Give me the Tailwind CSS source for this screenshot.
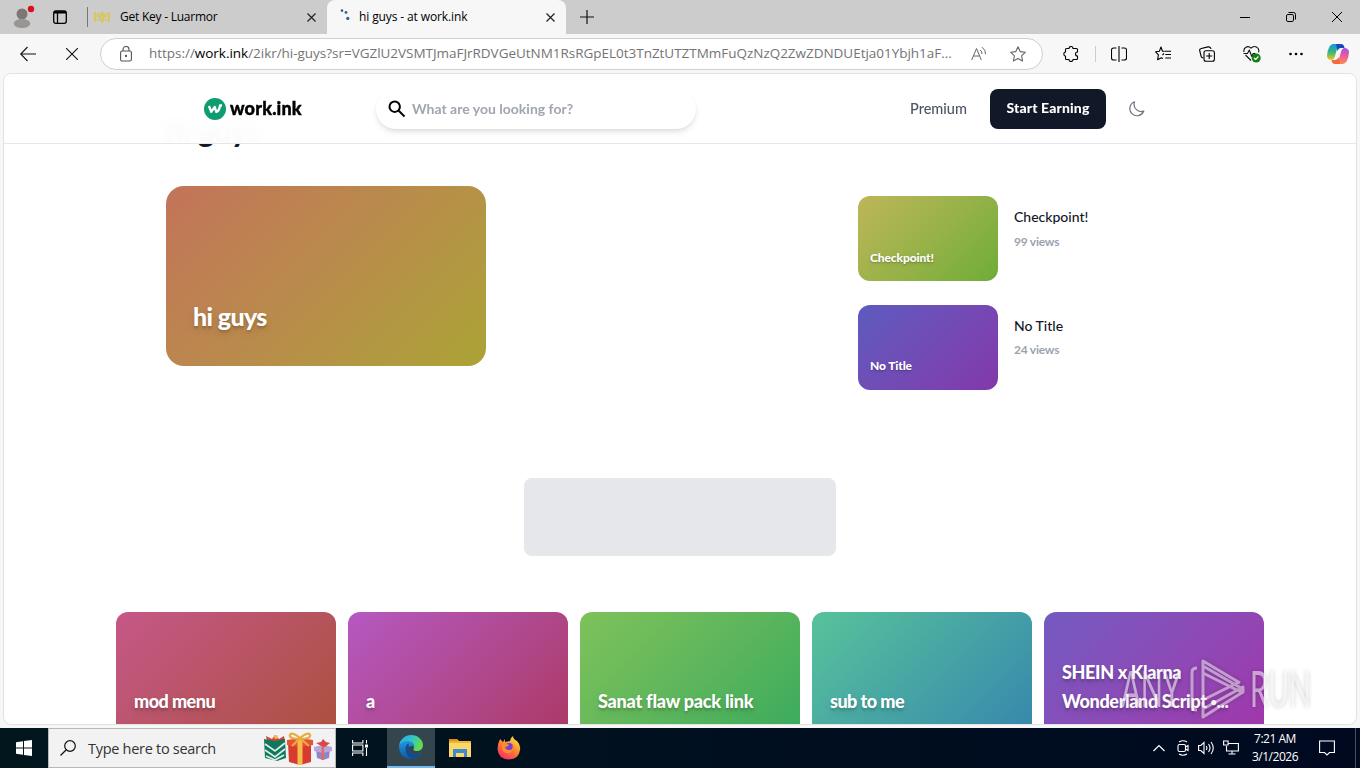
<!DOCTYPE html>
<html lang="en">
<head>
    <meta charset="UTF-8">
    <meta name="viewport" content="width=device-width, initial-scale=1.0">
    <title>hi guys - at work.ink</title>
    <script src="https://cdn.jsdelivr.net/npm/@tailwindcss/browser@4"></script>
</head>
<body class="w-[1360px] h-[768px] overflow-hidden flex flex-col bg-[#f7f7f7] font-['Open_Sans',sans-serif] text-black">

    <!-- Tab strip -->
    <div class="h-[34px] shrink-0 bg-[#cccccc] flex items-center">
        <svg class="ml-3 w-6 h-6 shrink-0" viewBox="0 0 24 24">
            <circle cx="10" cy="9" r="5.5" fill="#7d7875"/>
            <ellipse cx="10" cy="18.500" rx="8.3" ry="4.500" fill="#999593"/>
            <circle cx="19" cy="4" r="3.2" fill="#d8101c"/>
        </svg>
        <svg class="ml-[17px] w-[14px] h-[14px] shrink-0" viewBox="0 0 14 14" fill="none" stroke="#000" stroke-width="1.3">
            <rect x=".7" y=".9" width="12.6" height="12.4" rx="2"/>
            <path d="M1 2.300h12" stroke-width="2.400"/><path d="M4.500 2v11"/>
        </svg>
        <div class="ml-5 w-px h-5 bg-[#777]"></div>
        <svg class="ml-1.5 w-4 h-4 shrink-0" viewBox="0 0 16 16" fill="none" stroke="#d5c768" stroke-width="2.300">
            <path d="M1 3v10M4 4v3h2M4 12v-2M8 3l-2 5 2 5M8 3l2 5-2 5M12 4v3h-2M15 3v10M12 12v-2"/>
        </svg>
        <span class="ml-[10px] w-[187px] text-[12px] whitespace-nowrap tracking-[-0.02em]">Get Key - Luarmor</span>
        <svg class="w-[9px] h-[9px] shrink-0" viewBox="0 0 9 9" stroke="#222" stroke-width="1.2"><path d="M.5.5l8 8M8.5.5l-8 8"/></svg>
        <div class="ml-[11px] w-[239px] h-[34px] bg-[#f7f7f7] rounded-t-lg flex items-center">
            <svg class="ml-[12px] w-4 h-4 shrink-0" viewBox="0 0 16 16" fill="#315f8f">
                <circle cx="3" cy="1.6" r="1.3"/><circle cx="7" cy="3.4" r="1.4"/><circle cx="8.8" cy="9.4" r="1.6"/>
            </svg>
            <span class="ml-[4px] w-[187px] text-[12px] whitespace-nowrap tracking-[-0.01em]">hi guys - at work.ink</span>
            <svg class="w-[9px] h-[9px] shrink-0" viewBox="0 0 9 9" stroke="#222" stroke-width="1.2"><path d="M.5.5l8 8M8.5.5l-8 8"/></svg>
        </div>
        <svg class="ml-[14px] w-[14px] h-[14px] shrink-0" viewBox="0 0 14 14" stroke="#111" stroke-width="1.2"><path d="M7 0v14M0 7h14"/></svg>
        <div class="ml-auto mr-[18px] flex items-center gap-9">
            <svg class="w-[10px] h-[10px]" viewBox="0 0 10 10" stroke="#000" stroke-width="1"><path d="M0 5.5h10"/></svg>
            <svg class="w-[10px] h-[10px]" viewBox="0 0 10 10" fill="none" stroke="#000" stroke-width="1"><rect x=".5" y="2.5" width="7" height="7" rx="1.4"/><path d="M2.5 .5h5a2 2 0 0 1 2 2v5"/></svg>
            <svg class="w-[10px] h-[10px]" viewBox="0 0 10 10" stroke="#000" stroke-width="1"><path d="M0 0l10 10M10 0L0 10"/></svg>
        </div>
    </div>

    <!-- Toolbar -->
    <div class="h-[39px] shrink-0 flex items-center">
        <svg class="ml-5 w-4 h-4 shrink-0" viewBox="0 0 16 16" fill="none" stroke="#111" stroke-width="1.1"><path d="M16 8H.8M7.5 1L.7 8l6.8 7"/></svg>
        <svg class="ml-[30px] w-3 h-3 shrink-0" viewBox="0 0 12 12" stroke="#111" stroke-width="1.1"><path d="M0 0l12 12M12 0L0 12"/></svg>
        <div class="ml-[22px] w-[943px] h-8 bg-white rounded-full border border-[#cfcfcf] flex items-center shrink-0">
            <svg class="ml-[19px] w-3 h-4 shrink-0" viewBox="0 0 12 16" fill="none" stroke="#555" stroke-width="1.1">
                <rect x=".6" y="5" width="10.8" height="10" rx="1.5"/><path d="M3 5V3.500a3 3 0 0 1 6 0V5"/><circle cx="6" cy="10" r=".6" fill="#555"/>
            </svg>
            <span class="ml-[17px] w-[805px] text-[13.5px] whitespace-nowrap text-[#747474] tracking-[-0.002em]">https://<span class="text-black">work.ink</span>/2ikr/hi-guys?sr=VGZlU2VSMTJmaFJrRDVGeUtNM1RsRGpEL0t3TnZtUTZTMmFuQzNzQ2ZwZDNDUEtja01Ybjh1aF...</span>
            <svg class="ml-[17px] w-4 h-4 shrink-0" viewBox="0 0 16 16" fill="none" stroke="#666" stroke-width="1">
                <path d="M.7 14L5.500 2.500 10.300 14M2.400 10h6.200M9.200 4q2 1.500 1.800 4M11 1.200q4 2.800 3.500 7"/>
            </svg>
            <svg class="ml-[23px] w-4 h-4 shrink-0" viewBox="0 0 16 16" fill="none" stroke="#666" stroke-width="1.1" stroke-linejoin="round">
                <path d="M8 .8l2.200 4.800 5.200.6-3.800 3.600 1 5.200L8 12.400 3.400 15l1-5.200L.6 6.200l5.200-.6z"/>
            </svg>
        </div>
        <svg class="ml-[20px] w-4 h-4 shrink-0" viewBox="0 0 16 16" fill="none" stroke="#000" stroke-width="1.1" stroke-linejoin="round">
            <path d="M3.500 2.500H6a2 2 0 0 1 4 0h3.500q1 0 1 1V6a2 2 0 0 0 0 4v2.500q0 1-1 1H10a2 2 0 0 1-4 0H3.500q-1 0-1-1V10.200a2.200 2.200 0 0 1 0-4.300V3.500q0-1 1-1z"/>
        </svg>
        <div class="ml-4 w-px h-4 bg-[#ccc]"></div>
        <svg class="ml-[15px] w-4 h-4 shrink-0" viewBox="0 0 16 16" fill="none" stroke="#000" stroke-width="1.1">
            <path d="M5.500 2H2.500a2 2 0 0 0-2 2v8a2 2 0 0 0 2 2h3M10.500 2h3a2 2 0 0 1 2 2v8a2 2 0 0 1-2 2h-3M8 0v16"/>
        </svg>
        <svg class="ml-7 w-4 h-4 shrink-0" viewBox="0 0 16 16" fill="none" stroke="#000" stroke-width="1.100" stroke-linejoin="round">
            <path d="M9 5.300H7.500L6 1 4.400 5.200.6 5.800l2.800 3-.8 5L6.400 11.800l1.500.8M7.500 9L9 7.500M9.300 5.300H16M10.300 8.500H16M10.300 12H16"/>
        </svg>
        <svg class="ml-7 w-4 h-4 shrink-0" viewBox="0 0 16 16" fill="none" stroke="#000" stroke-width="1.100">
            <rect x="5" y="4.800" width="10.400" height="10.400" rx="2"/><path d="M10.200 7v6M7.200 10h6M12 3C11.500.5 10.500.6 9 .9L2.300 2.500C.8 2.900.4 3.600.8 5l1.400 5.500c.3 1 .8 1.400 2 1.500"/>
        </svg>
        <svg class="ml-7 w-[18px] h-[18px] shrink-0" viewBox="0 0 18 18" fill="none" stroke="#111" stroke-width="1.100" stroke-linejoin="round">
            <path d="M1 7C0 2.500 5 0 8 3.200 11-.2 17 2 15.600 7.400M2.500 10L8 15.500M.5 8.500h4L6.300 5l2.500 6.500 1.400-3h2.300"/>
            <circle cx="13.200" cy="13" r="4.500" fill="#128212" stroke="none"/><path d="M11 13l1.600 1.500 2.800-3" stroke="#fff"/>
        </svg>
        <svg class="ml-[27px] w-4 h-4 shrink-0" viewBox="0 0 16 16" fill="#000"><circle cx="2.500" cy="8" r="1.300"/><circle cx="8" cy="8" r="1.300"/><circle cx="13.500" cy="8" r="1.300"/></svg>
        <svg class="ml-[22px] w-6 h-6 shrink-0" viewBox="0 0 24 24">
            <defs>
                <linearGradient id="copA" x1="0" y1="0" x2="0" y2="1"><stop stop-color="#1496e8"/><stop offset=".5" stop-color="#35b87a"/><stop offset="1" stop-color="#f2c51c"/></linearGradient>
                <linearGradient id="copB" x1="0" y1="0" x2="0" y2="1"><stop stop-color="#9a52e8"/><stop offset=".5" stop-color="#f05a98"/><stop offset="1" stop-color="#ff8a4c"/></linearGradient>
            </defs>
            <path d="M7 2h8q-3 1-4 5L9 14q-1 4-4 4-4-.5-4-4.500Q2 3 7 2z" fill="url(#copA)"/>
            <path d="M10 2h5q3 0 3.500 4h-4q-2 0-3 3z" fill="#1748ba"/>
            <path d="M17 22H9q3-1 4-5l2-7q1-4 4-4 4 .5 4 4.500Q22 21 17 22z" fill="url(#copB)"/>
            <path d="M14 22H9q-3 0-3.500-4h4q2 0 3-3z" fill="#f26a3b"/>
        </svg>
    </div>

    <!-- Page -->
    <div class="mx-[3px] h-[652px] shrink-0 bg-white rounded-lg border border-[#e2e2e2] overflow-hidden font-[Lato,sans-serif]">
        <header class="relative z-10 h-[70px] bg-white/97 backdrop-blur-sm border-b border-gray-200 flex items-center">
            <svg class="ml-[200px] w-[22px] h-[22px] shrink-0" viewBox="0 0 22 22">
                <circle cx="11" cy="11" r="11" fill="#0d9d70"/>
                <path d="M5 8l2.200 5.800 3.600-4.800 1.500 5q3-1 3.700-6.500h2" fill="none" stroke="#fff" stroke-width="2.300" stroke-linejoin="round"/>
            </svg>
            <span class="ml-[4px] w-[146px] text-[18px] font-black tracking-[0.01em] [-webkit-text-stroke:0.4px_black]">work.ink</span>
            <div class="w-[320px] h-10 rounded-full bg-white shadow-md flex items-center shrink-0">
                <svg class="ml-3 w-[18px] h-[18px] shrink-0" viewBox="0 0 18 18" fill="none" stroke="#000" stroke-width="2"><circle cx="6.700" cy="6.700" r="5.200"/><path d="M10.500 10.500l6 6"/></svg>
                <span class="ml-[6px] text-sm font-bold text-[#a0a5b0] whitespace-nowrap">What are you looking for?</span>
            </div>
            <span class="ml-[214px] w-[80px] text-[14.500px] text-[#4b5563] font-medium">Premium</span>
            <button class="w-[116px] h-10 rounded-lg bg-[#111827] text-white text-[14px] font-black pb-0.5 tracking-[0.01em] whitespace-nowrap">Start Earning</button>
            <svg class="ml-[23px] w-4 h-4 shrink-0" viewBox="0 0 16 16" fill="none" stroke="#6b7280" stroke-width="1.200" stroke-linejoin="round"><path d="M5.500.8A7.200 7.200 0 1 0 14.800 10 7.200 7.200 0 0 1 5.500.8z"/></svg>
        </header>

        <main>
            <h1 class="-mt-[32px] ml-[162px] h-9 text-[30px] leading-9 font-black text-[#111827]">hi guys</h1>
            <div class="mt-[38px] ml-[162px] h-[292px] flex">
                <div class="w-[320px] h-[180px] rounded-[18px] bg-linear-135 from-[#c37359] to-[#aba335] flex items-end pl-[27px] pb-[34px]">
                    <span class="text-[25px] leading-8 font-black text-white tracking-[-0.025em] text-shadow-lg">hi guys</span>
                </div>
                <div class="ml-[372px] mt-[10px] flex flex-col gap-6">
                    <div class="flex gap-4">
                        <div class="w-[140px] h-[85px] rounded-xl bg-linear-135 from-[#beb658] to-[#6dad38] flex items-end px-3 pb-[14px]">
                            <span class="text-[12px] leading-[18px] font-black text-white tracking-[-0.01em] text-shadow-md">Checkpoint!</span>
                        </div>
                        <div class="pt-[11px]">
                            <p class="text-[14px] leading-5 font-medium text-[#111827]">Checkpoint!</p>
                            <p class="mt-[7px] text-[12px] leading-4 font-bold tracking-[-0.02em] text-[#9ca3af]">99 views</p>
                        </div>
                    </div>
                    <div class="flex gap-4">
                        <div class="w-[140px] h-[85px] rounded-xl bg-linear-135 from-[#5c5bc0] to-[#8337aa] flex items-end px-3 pb-[15px]">
                            <span class="text-[12px] leading-[18px] font-black text-white tracking-[-0.01em] text-shadow-md">No Title</span>
                        </div>
                        <div class="pt-[11px]">
                            <p class="text-[14px] leading-5 font-medium text-[#111827]">No Title</p>
                            <p class="mt-[6px] text-[12px] leading-4 font-bold tracking-[-0.02em] text-[#9ca3af]">24 views</p>
                        </div>
                    </div>
                </div>
            </div>
            <div class="mx-auto w-[312px] h-[78px] rounded-lg bg-[#e5e7eb]"></div>
            <div class="mt-14 ml-[112px] flex gap-3">
                <div class="w-[220px] h-[124px] rounded-xl bg-linear-135 from-[#c55788] to-[#ac503b] flex items-end pl-[18px] pb-[20px] text-[18px] leading-[29px] font-black tracking-[-0.03em] text-white text-shadow-lg">mod menu</div>
                <div class="w-[220px] h-[124px] rounded-xl bg-linear-135 from-[#b558c2] to-[#ac3865] flex items-end pl-[18px] pb-[20px] text-[18px] leading-[29px] font-black tracking-[-0.03em] text-white text-shadow-lg">a</div>
                <div class="w-[220px] h-[124px] rounded-xl bg-linear-135 from-[#7ec25a] to-[#37ab5d] flex items-end pl-[18px] pb-[20px] text-[18px] leading-[29px] font-black tracking-[-0.012em] text-white text-shadow-lg">Sanat flaw pack link</div>
                <div class="w-[220px] h-[124px] rounded-xl bg-linear-135 from-[#58c299] to-[#3887ac] flex items-end pl-[18px] pb-[20px] text-[18px] leading-[29px] font-black tracking-[-0.03em] text-white text-shadow-lg">sub to me</div>
                <div class="w-[220px] h-[124px] rounded-xl bg-linear-135 from-[#735ac2] to-[#a135ab] flex items-end pl-[18px] pb-[20px] text-[18px] leading-[29px] font-black tracking-[-0.02em] text-white text-shadow-lg"><p class="whitespace-nowrap">SHEIN x Klarna<br>Wonderland Script <span class="text-[11px] align-[2px]">•</span>...</p></div>
            </div>
        </main>
    </div>

    <!-- Taskbar -->
    <div class="mt-[3px] h-10 shrink-0 bg-linear-to-r from-[#02161e] to-[#000920] flex items-center text-white">
        <svg class="ml-4 w-4 h-4 shrink-0" viewBox="0 0 16 16" fill="#fff"><path d="M0 2.200l7-1v6.300H0zM8 1l8-1v7.500H8zM0 8.500h7v6.300l-7-1zM8 8.500h8V16l-8-1z"/></svg>
        <div class="ml-4 w-[288px] h-10 bg-[#f2f2f2] border border-[#b8b8b8] flex items-center text-[#333] shrink-0">
            <svg class="ml-[11px] w-4 h-4 shrink-0" viewBox="0 0 16 16" fill="none" stroke="#111" stroke-width="1.200"><circle cx="10" cy="6" r="5.300"/><path d="M6 10L.5 15.500"/></svg>
            <span class="ml-3 w-[175px] pt-0.5 text-[14.500px] whitespace-nowrap tracking-[-0.02em]">Type here to search</span>
            <svg class="w-[70px] h-[34px] shrink-0" viewBox="0 0 70 34">
                <path d="M4 10l-1-5 6 3 3-4 4 4 5-3 1 6z" fill="#d84434"/><circle cx="13" cy="6" r="2" fill="#e9c04a"/>
                <path d="M1 8l11 2 10-2 1 19-9 3-12-3z" fill="#12765f"/>
                <path d="M2 13l10 7 10-8M2 19l10 7 10-8M3 25l9 4 9-5" stroke="#d9efe2" stroke-width="1.800" fill="none"/>
                <path d="M25 12h23v19l-11 3-11-3z" fill="#d93a30"/><path d="M24 9l13-2 13 2v5l-13 2-13-2z" fill="#e8503e"/>
                <path d="M34.500 9h5v25h-5z" fill="#f3bd49"/><path d="M37 7Q28 0 27 4q-1 4 10 4 11 0 10-4-1-4-10 3zM36 8l-7 7M38 8l8 7" fill="none" stroke="#e9ab3c" stroke-width="2.200"/>
                <path d="M53 18h14l-1 9-6 2-6-2z" fill="#8c87c7"/><path d="M51 16l9-2 9 2v4l-9 2-9-2z" fill="#b8a5dc"/><path d="M58.500 16h2.500v13h-2.500z" fill="#e36b6b"/><path d="M60 16l-7-4 5-1 2-3 3 3 4 1-5 4z" fill="#d84a46"/>
            </svg>
        </div>
        <svg class="ml-4 w-4 h-4 shrink-0" viewBox="0 0 16 16" fill="none" stroke="#fff" stroke-width="1.100"><path d="M.6 0v3h10.300V0M.6 16v-3h10.300v3M.6 5h10.300v6H.6zM14.500 0v3.500M14.500 8v8"/><path d="M13 4.500h3v3h-3z" fill="#fff" stroke="none"/></svg>
        <div class="ml-[19px] w-12 h-10 bg-[#34454d] border-b-2 border-[#76b9ed] flex items-center justify-center shrink-0">
            <svg class="w-6 h-6" viewBox="0 0 24 24">
                <defs>
                    <linearGradient id="edgeA" x1="0" y1="0" x2="1" y2=".4"><stop stop-color="#2aa5dd"/><stop offset=".5" stop-color="#2fc2cf"/><stop offset="1" stop-color="#62dc4e"/></linearGradient>
                    <linearGradient id="edgeB" x1="0" y1="0" x2="0" y2="1"><stop stop-color="#2196dc"/><stop offset="1" stop-color="#0c59a8"/></linearGradient>
                </defs>
                <path d="M0 11C1 4 6 0 12 0c7 0 12 5 12 10 0 4-3 6-6 6-4 0-4-1.500-3-3 1-4-2-6-6-6-5 0-9 3-9 4z" fill="url(#edgeA)"/>
                <path d="M0 11c2-4 6-5 9-5 4 0 7 3 6 6-1-1-4-2-5 1-1 5 4 8 12 5-2 4-6 6-10 6C5 24 0 19 0 11z" fill="url(#edgeB)"/>
                <path d="M9.500 8C5 11 5 20 13 23.800 17 24 20 21 22 18c-8 3-13-.5-12-5z" fill="#134b91"/>
            </svg>
        </div>
        <svg class="ml-[14px] w-[22px] h-5 shrink-0" viewBox="0 0 22 20">
            <path d="M0 1h8l2 2h12v16H0z" fill="#f0b52c"/><path d="M0 5h22v14H0z" fill="#fcd667"/><path d="M0 1h8v2H0z" fill="#e28e1c"/><path d="M4 11h14v8h-3v-4H7v4H4z" fill="#3b8dcb"/>
        </svg>
        <svg class="ml-[26px] w-6 h-6 shrink-0" viewBox="0 0 24 24">
            <defs><linearGradient id="ffx" x1=".8" y1="0" x2=".2" y2="1"><stop stop-color="#ffe646"/><stop offset=".45" stop-color="#ff8a2a"/><stop offset="1" stop-color="#f5246a"/></linearGradient></defs>
            <path d="M3 3l3 3 2-3v3l5-1q0-3 3-5 0 3 4 5 4 4 3 9-1 9-11 9.500Q1 23 .5 13 .5 8 3 3z" fill="url(#ffx)"/>
            <circle cx="12" cy="12" r="5" fill="#7440d8"/><path d="M5 8q4-2 7 1-1 2-4 2 1 3 4 3 5 0 3-6 4 3 1 7-4 4-9 1-3-3-2-8z" fill="#ff8a29"/>
        </svg>
        <div class="ml-auto flex items-center h-10">
            <svg class="w-3 h-2 mr-3" viewBox="0 0 12 8" fill="none" stroke="#fff" stroke-width="1.200"><path d="M.5 7L6 1.500 11.500 7"/></svg>
            <svg class="w-[12px] h-4 mr-[9px]" viewBox="0 0 12 16" fill="none" stroke="#fff" stroke-width="1.100"><rect x="1" y="4.500" width="7.500" height="7" rx="1.500"/><path d="M8.500 7l2.500-1.500v5L8.500 9M2 2q4-2.500 8 0M2 14q4 2.500 8 0"/></svg>
            <svg class="w-[17px] h-4 mr-2" viewBox="0 0 17 16" fill="none" stroke="#fff" stroke-width="1.100"><path d="M.6 5.500h2.200L6 2.500v11l-3.200-3H.6zM8.200 6q1.400 2 0 4M10.500 4q3 4 0 8M13 2q4.500 6 0 12"/></svg>
            <svg class="w-4 h-4 mr-3" viewBox="0 0 16 16" fill="none" stroke="#fff" stroke-width="1.100"><path d="M5 3.500h10.400v7.500H3.500V6M9 11v3M5.500 14h7"/><path d="M.6 1h4.500v4H.6z"/></svg>
            <div class="w-[48px] text-center text-[12px] leading-[18px] flex flex-col items-center whitespace-nowrap tracking-[-0.04em]"><span>7:21 AM</span><span>3/1/2026</span></div>
            <svg class="w-4 h-4 ml-5" viewBox="0 0 16 16" fill="none" stroke="#fff" stroke-width="1.100"><path d="M.6 1h14.800v11.500H10.500L8 15l-2.500-2.500H.6z"/></svg>
            <div class="ml-5 w-px h-10 bg-[#47505e] mr-1"></div>
        </div>
    </div>

    <!-- Watermark -->
    <svg class="absolute left-[1115px] top-[652px] w-[205px] h-[72px] drop-shadow-[0_0_2px_rgba(0,0,0,0.35)]" viewBox="0 0 205 72" fill="#fff" fill-opacity=".55" font-family="Lato, sans-serif" font-size="50" font-weight="400">
        <text x="6" y="55" textLength="60" lengthAdjust="spacingAndGlyphs">ANY</text>
        <text x="135" y="55" textLength="61" lengthAdjust="spacingAndGlyphs">RUN</text>
        <path d="M125 31L88 9v7M82 16q-5 0-5 4v34q0 4 5 4M88 16v32M88 21l38 19v-4l-38-22M88 48l36-18M88 58v7l40-25v-5l-40 22v-7" fill="none" stroke="#fff" stroke-opacity=".5" stroke-width="3" stroke-linejoin="round"/>
    </svg>
</body>
</html>
